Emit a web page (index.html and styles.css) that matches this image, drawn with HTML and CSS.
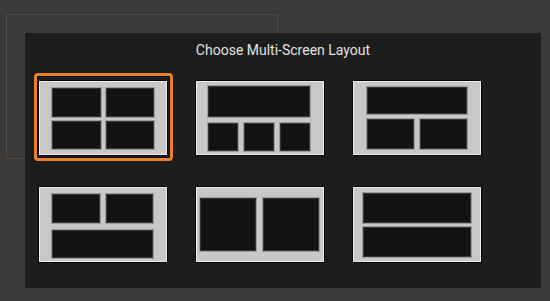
FILE: index.html
```html
<!DOCTYPE html>
<html lang="en">
<head>
    <meta charset="UTF-8">
    <meta name="viewport" content="width=device-width, initial-scale=1.0">
    <title>Choose Multi-Screen Layout</title>
    <link rel="stylesheet" href="styles.css">
</head>
<body>
    <!-- faded outline of the previously focused window -->
    <div class="ghost-frame"></div>

    <div class="dialog">
        <h2 class="dialog-title">Choose Multi-Screen Layout</h2>
        <div class="layout-grid">
            <div class="tile selected">
                <div class="card quad">
                    <div class="pane"></div><div class="pane"></div>
                    <div class="pane"></div><div class="pane"></div>
                </div>
            </div>
            <div class="tile">
                <div class="card one-three">
                    <div class="pane wide"></div>
                    <div class="pane"></div><div class="pane"></div><div class="pane"></div>
                </div>
            </div>
            <div class="tile">
                <div class="card one-two">
                    <div class="pane wide"></div>
                    <div class="pane"></div><div class="pane"></div>
                </div>
            </div>
            <div class="tile">
                <div class="card two-one">
                    <div class="pane"></div><div class="pane"></div>
                    <div class="pane wide"></div>
                </div>
            </div>
            <div class="tile">
                <div class="card side-by-side">
                    <div class="pane"></div><div class="pane"></div>
                </div>
            </div>
            <div class="tile">
                <div class="card stacked">
                    <div class="pane"></div>
                    <div class="pane"></div>
                </div>
            </div>
        </div>
    </div>
</body>
</html>
```

FILE: styles.css
```css
body {
    margin: 0;
    padding: 33px 0 0 25px;
    height: 301px;
    box-sizing: border-box;
    background-color: #3b3b3c;
    font-family: Roboto, "Liberation Sans", sans-serif;
    overflow: hidden;
    position: relative;
}

.ghost-frame {
    position: absolute;
    left: 6px;
    top: 14px;
    width: 272px;
    height: 145px;
    border: 1px solid #5a4b3e;
    border-radius: 2px;
    box-sizing: border-box;
}

.dialog {
    position: relative;
    width: 516px;
    height: 255px;
    box-sizing: border-box;
    padding: 9px 0 0 9px;
    background-color: rgba(27, 27, 27, 0.93);
}

.dialog-title {
    margin: 0 0 14px -9px;
    font-size: 14px;
    line-height: 17px;
    font-weight: normal;
    text-align: center;
    color: #e2e2e2;
}

.layout-grid {
    display: grid;
    grid-template-columns: repeat(3, 139px);
    grid-auto-rows: 88px;
    gap: 18px;
}

.tile {
    box-sizing: border-box;
    border: 3px solid transparent;
    border-radius: 4px;
    padding: 5px 0 0 2px;
}

.tile.selected {
    border-color: #e8812b;
    box-shadow: inset 0 0 0 1px #0c0c0c;
}

.card {
    width: 128px;
    height: 74px;
    box-sizing: border-box;
    display: grid;
    background-color: #c8c8c8;
    border: 1px solid #ececec;
    box-shadow: 0 0 0 1px #060606;
}

.pane {
    background-color: #131313;
    border: 1px solid #363636;
    box-shadow: 0 0 0 1px #9d9d9d;
}

.pane.wide {
    grid-column: 1 / -1;
}

.quad {
    grid-template-columns: 1fr 1fr;
    grid-template-rows: 1fr 1fr;
    column-gap: 5px;
    row-gap: 4px;
    padding: 6px 12px 5px 12px;
}

.one-three {
    grid-template-columns: 1fr 1fr 1fr;
    grid-template-rows: 31px 1fr;
    column-gap: 6px;
    row-gap: 6px;
    padding: 4px 13px 3px 11px;
}

.one-two {
    grid-template-columns: 1fr 1fr;
    grid-template-rows: 27px 1fr;
    column-gap: 6px;
    row-gap: 5px;
    padding: 5px 13px 5px 13px;
}

.two-one {
    height: 75px;
    grid-template-columns: 1fr 1fr;
    grid-template-rows: 29px 1fr;
    column-gap: 6px;
    row-gap: 7px;
    padding: 6px 13px 3px 12px;
}

.side-by-side {
    height: 75px;
    grid-template-columns: 1fr 1fr;
    column-gap: 7px;
    padding: 10px 4px 10px 3px;
}

.stacked {
    height: 75px;
    grid-template-rows: 1fr 1fr;
    row-gap: 4px;
    padding: 5px 9px 4px 9px;
}
```
